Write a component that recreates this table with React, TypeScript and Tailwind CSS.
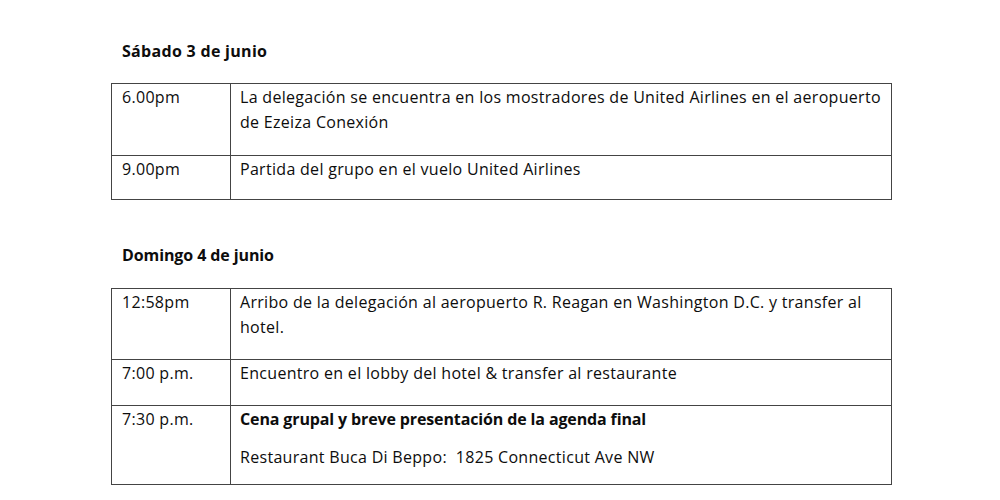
const font = { fontFamily: "'Open Sans', Lato, sans-serif" };

type Row = { time: string; lines: React.ReactNode; pb: string };

const sabado: Row[] = [
  {
    time: "6.00pm",
    lines: (
      <p>
        La delegación se encuentra en los mostradores de United Airlines en el
        aeropuerto
        <br />
        de Ezeiza Conexión
      </p>
    ),
    pb: "pb-[20px]",
  },
  {
    time: "9.00pm",
    lines: <p>Partida del grupo en el vuelo United Airlines</p>,
    pb: "pb-[17px]",
  },
];

const domingo: Row[] = [
  {
    time: "12:58pm",
    lines: (
      <p>
        Arribo de la delegación al aeropuerto R. Reagan en Washington D.C. y
        transfer al
        <br />
        hotel.
      </p>
    ),
    pb: "pb-[19px]",
  },
  {
    time: "7:00 p.m.",
    lines: <p>Encuentro en el lobby del hotel &amp; transfer al restaurante</p>,
    pb: "pb-[19px]",
  },
  {
    time: "7:30 p.m.",
    lines: (
      <>
        <p className="font-bold tracking-[-0.13px]">
          Cena grupal y breve presentación de la agenda final
        </p>
        <p className="mt-[13px]">
          Restaurant Buca Di Beppo:&nbsp; 1825 Connecticut Ave NW
        </p>
      </>
    ),
    pb: "pb-[14px]",
  },
];

const Schedule = ({ rows }: { rows: Row[] }) => (
  <div className="border border-[#444]">
    {rows.map((r, i) => (
      <div
        key={i}
        className={`flex ${i > 0 ? "border-t border-[#444]" : ""}`}
      >
        <div className={`w-[119px] shrink-0 border-r border-[#444] pl-[10px] pt-[1px] ${r.pb}`}>
          {r.time}
        </div>
        <div className={`flex-1 pl-[9px] pr-[2px] pt-[1px] whitespace-nowrap ${r.pb}`}>
          {r.lines}
        </div>
      </div>
    ))}
  </div>
);

export default function App() {
  return (
    <div
      style={font}
      className="w-[1000px] h-[500px] overflow-hidden bg-white text-[16px] leading-[25px] tracking-[0.3px] text-[#0d0d0d]"
    >
      <div className="ml-[111px] w-[781px] pt-[39px]">
        <h2 className="pl-[11px] font-bold">Sábado 3 de junio</h2>
        <div className="mt-[19px]">
          <Schedule rows={sabado} />
        </div>

        <h2 className="pl-[11px] font-bold mt-[43px] tracking-[-0.1px]">Domingo 4 de junio</h2>
        <div className="mt-[20px]">
          <Schedule rows={domingo} />
        </div>
      </div>
    </div>
  );
}
